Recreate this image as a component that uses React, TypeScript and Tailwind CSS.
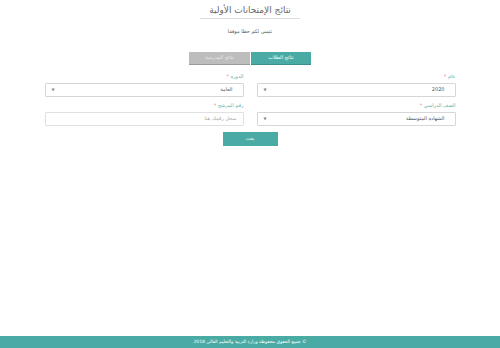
import React from "react";

const font = { fontFamily: '"DejaVu Sans", "Noto Sans", sans-serif' };

function Label({ text }: { text: string }) {
  return (
    <div className="text-[5px] leading-[6px] text-[#5bb3ad] mb-[4px] h-[6px]">
      {text} <span className="text-[#e88]">*</span>
    </div>
  );
}

function Select({ value }: { value: string }) {
  return (
    <div className="h-[14px] border border-[#d6d6d6] rounded-[1px] bg-white flex items-center justify-between pr-[10px] pl-[6px] text-[5px] text-[#555]">
      <span>{value}</span>
      <span className="text-[4px] text-[#888]">▼</span>
    </div>
  );
}

export default function App() {
  return (
    <div dir="rtl" style={font} className="w-[500px] h-[348px] bg-white flex flex-col">
      <div className="flex flex-col items-center flex-1">
        <div className="text-[9px] leading-[10px] text-[#666] mt-[5px]">نتائج الإمتحانات الأولية</div>
        <div className="w-[100px] h-px bg-[#dcdcdc] mt-[3px]" />
        <div className="text-[5px] text-[#555] mt-[9px] leading-[6px]">نتمنى لكم حظا موفقا</div>
        <div className="flex mt-[18px] h-[13px]">
          <div className="w-[60px] bg-[#4aaba4] text-white text-[5px] flex items-center justify-center border-b border-[#3a8f89]">نتائج الطلاب</div>
          <div className="w-[61px] bg-[#bdbdbd] text-[#e8e8e8] text-[5px] flex items-center justify-center border-b border-[#9a9a9a] mr-px">نتائج المدرسة</div>
        </div>
        <div className="w-[411px] grid grid-cols-2 gap-x-[13px] mt-[8px]">
          <div>
            <Label text="عام" />
            <Select value="2020" />
          </div>
          <div>
            <Label text="الدورة" />
            <Select value="العامة" />
          </div>
          <div className="mt-[5px]">
            <Label text="الصف الدراسي" />
            <Select value="الشهادة المتوسطة" />
          </div>
          <div className="mt-[5px]">
            <Label text="رقم المرشح" />
            <div className="h-[14px] border border-[#e0e0e0] rounded-[1px] bg-white flex items-center px-[6px] text-[5px] text-[#aaa]">
              سجل رقمك هنا
            </div>
          </div>
        </div>
        <div className="mt-[6px] w-[55px] h-[14px] bg-[#4aaba4] text-white text-[4.5px] flex items-center justify-center">بحث</div>
      </div>
      <div className="h-[12px] bg-[#4aaba4] text-white text-[4.5px] flex items-center justify-center">
        © جميع الحقوق محفوظة وزارة التربية والتعليم العالي 2018
      </div>
    </div>
  );
}
